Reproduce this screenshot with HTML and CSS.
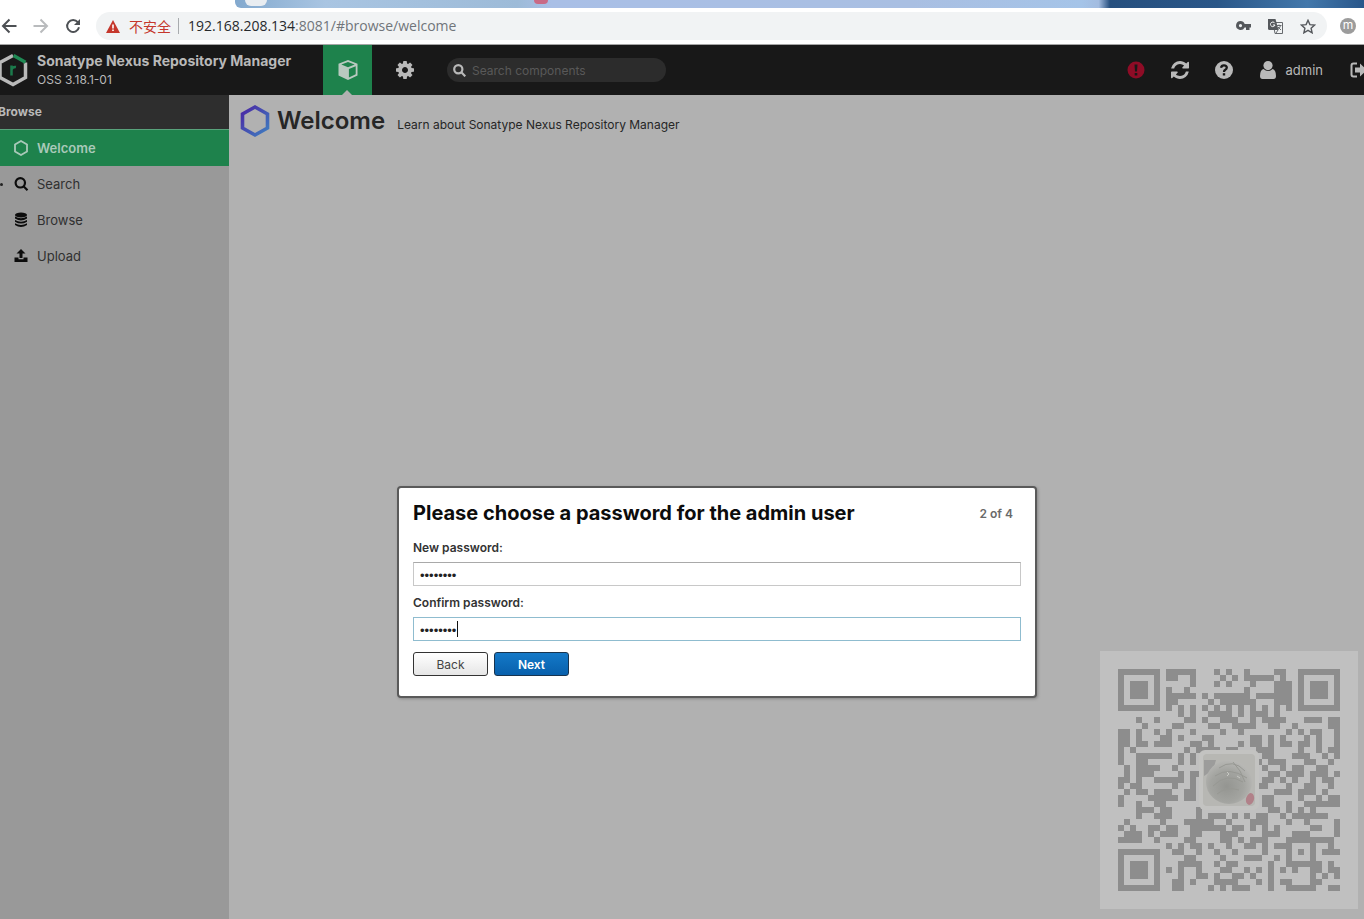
FILE: index.html
```html
<!DOCTYPE html>
<html lang="en">
<head>
<meta charset="utf-8">
<title>Sonatype Nexus Repository Manager</title>
<link rel="stylesheet" href="styles.css">
</head>
<body>
<div class="tabstrip"><span class="tabs"><i class="tab-dot"></i><i class="tab-mark"></i></span></div>
<div class="toolbar">
  <button class="nav-btn" aria-label="Back"><svg width="16" height="16" viewBox="0 0 16 16" fill="none" stroke="#4d5054" stroke-width="2"><path d="M15.500 8H2.500M8.500 1.500L2 8l6.500 6.500"/></svg></button>
  <button class="nav-btn" aria-label="Forward"><svg width="16" height="16" viewBox="0 0 16 16" fill="none" stroke="#b9bbbd" stroke-width="2"><path d="M.5 8h13M7.500 1.500L14 8l-6.500 6.500"/></svg></button>
  <button class="nav-btn" aria-label="Reload"><svg width="16" height="16" viewBox="0 0 16 16"><path d="M12.800 4.200A6 6 0 1 0 14 9.300" fill="none" stroke="#4d5054" stroke-width="2"/><path d="M15 1v6H9z" fill="#4d5054"/></svg></button>
  <div class="address">
    <svg width="14" height="13" viewBox="0 0 14 13"><path d="M7 0l7 13H0z" fill="#c5372c"/><path d="M6.200 4.500h1.600v4H6.200zM6.200 9.500h1.600v1.600H6.200z" fill="#fff"/></svg>
    <span class="insecure" lang="zh">不安全</span>
    <span class="url"><b>192.168.208.134</b>:8081/#browse/welcome</span>
    <span class="address-tools">
      <svg width="15" height="10" viewBox="0 0 15 10"><path fill="#55585c" fill-rule="evenodd" d="M4.500 0a4.500 4.500 0 0 1 4.200 3H15v3.500h-1.500V9H10V6.500H8.600A4.500 4.500 0 1 1 4.500 0zm0 3a1.600 1.600 0 1 0 0 3.200 1.600 1.600 0 0 0 0-3.200z"/></svg>
      <svg width="15" height="15" viewBox="0 0 15 15"><path d="M5 3.500h9.500v11H7z" fill="#f1f3f4" stroke="#66696d"/><path d="M0 0h7.500l3 11H1.500A1.500 1.500 0 0 1 0 9.500z" fill="#55585c"/><path d="M6.800 4.200A2.300 2.300 0 1 0 7 6H4.900" fill="none" stroke="#fff"/><path d="M8.500 6.500h5M11 5.500v1M12.500 6.500q-.5 2.500-3 4.500M10 8l3 3M8 14l2-3" fill="none" stroke="#66696d"/></svg>
      <svg width="16" height="15" viewBox="0 0 16 15"><path d="M8 1.300l1.900 4.300 4.700.5-3.500 3.100 1 4.600L8 11.400l-4.100 2.400 1-4.600L1.400 6.100l4.700-.5z" fill="none" stroke="#55585c" stroke-width="1.400"/></svg>
    </span>
  </div>
  <span class="avatar">m</span>
</div>

<header class="header">
  <svg class="logo" width="28" height="34" viewBox="0 0 28 34" fill="none"><path d="M13 2.500L0 9.500v15l13 7 12.500-7v-15" stroke="#b9b9b9" stroke-width="3.500"/><path d="M13.500 2.500L25.500 9.300" stroke="#1f8a54" stroke-width="3.500"/><path d="M11.500 22.500v-10M11.500 16.500q1-3 4.500-2.500" stroke="#1b7a4b" stroke-width="2.500"/></svg>
  <div class="brand"><strong>Sonatype Nexus Repository Manager</strong><span>OSS 3.18.1-01</span></div>
  <button class="mode mode-active" aria-label="Browse server contents"><svg width="20" height="20" viewBox="0 0 20 20"><path fill="#b9c9c0" fill-rule="evenodd" d="M10 0l9.500 3.800v11.700L10 20 .5 15.500V3.800zM10 1.900L3.300 4.500 10 7.200l6.700-2.700zM10.900 9v8.500l6.800-3.200V6.200z"/></svg></button>
  <button class="mode" aria-label="Server administration"><svg width="18" height="18" viewBox="0 0 1536 1536"><path fill="#b9b9b9" d="M1024 768q0-106-75-181t-181-75-181 75-75 181 75 181 181 75 181-75 75-181zm512-109v222q0 12-8 23t-20 13l-185 28q-19 54-39 91 35 50 107 138 10 12 10 25t-9 23q-27 37-99 108t-94 71q-12 0-26-9l-138-108q-44 23-91 38-16 136-29 186-7 28-36 28h-222q-14 0-24.500-8.500t-11.500-21.500l-28-184q-49-16-90-37l-141 107q-10 9-25 9-14 0-25-11-126-114-165-168-7-10-7-23 0-12 8-23 15-21 51-66.500t54-70.500q-27-50-41-99l-183-27q-13-2-21-12.500t-8-23.500v-222q0-12 8-23t19-13l186-28q14-46 39-92-40-57-107-138-10-12-10-24 0-10 9-23 26-36 98.500-107.500t94.500-71.500q13 0 26 10l138 107q44-23 91-38 16-136 29-186 7-28 36-28h222q14 0 24.500 8.500t11.500 21.500l28 184q49 16 90 37l142-107q9-9 24-9 13 0 25 10 129 119 165 170 7 8 7 22 0 12-8 23-15 21-51 66.500t-54 70.500q26 50 41 98l183 28q13 2 21 12.500t8 23.500z"/></svg></button>
  <label class="search"><svg width="13" height="13" viewBox="0 0 13 13" fill="none" stroke="#b9b9b9" stroke-width="2.200"><circle cx="5.300" cy="5.300" r="4.100"/><path d="M8.300 8.300l4 4"/></svg><input type="text" placeholder="Search components" aria-label="Search components"></label>
  <div class="user-tools">
    <button class="tool" aria-label="System status"><svg width="18" height="18" viewBox="0 0 18 18"><circle cx="9" cy="9" r="8.500" fill="#8e0c26"/><path d="M7.500 3.500h3L10 10.500H8zM7.700 12h2.600v2.500H7.700z" fill="#181818"/></svg></button>
    <button class="tool" aria-label="Refresh"><svg width="18" height="18" viewBox="0 0 1536 1536"><path fill="#b9b9b9" d="M1511 928q0 5-1 7-64 268-268 434.500t-478 166.500q-146 0-282.500-55t-243.500-157l-129 129q-19 19-45 19t-45-19-19-45v-448q0-26 19-45t45-19h448q26 0 45 19t19 45-19 45l-137 137q71 66 161 102t187 36q134 0 250-65t186-179q11-17 53-117 8-23 30-23h192q13 0 22.500 9.500t9.500 22.500zM1536 128v448q0 26-19 45t-45 19h-448q-26 0-45-19t-19-45 19-45l138-138q-148-137-349-137-134 0-250 65t-186 179q-11 17-53 117-8 23-30 23h-199q-13 0-22.500-9.500t-9.500-22.500v-7q65-268 270-434.500t480-166.500q146 0 284 55.500t245 156.500l130-129q19-19 45-19t45 19 19 45z"/></svg></button>
    <button class="tool" aria-label="Help"><svg width="18" height="18" viewBox="0 0 18 18"><circle cx="9" cy="9" r="9" fill="#b9b9b9"/><path d="M6 6.800Q6.500 4.200 9 4.300q2.700.1 2.800 2.300 0 1.300-1.500 2.200Q9 9.600 9 11" fill="none" stroke="#181818" stroke-width="2.300"/><path d="M7.800 12.200h2.400v2.300H7.800z" fill="#181818"/></svg></button>
    <button class="tool user"><svg width="16" height="18" viewBox="0 0 16 18"><circle cx="8" cy="4.600" r="4.600" fill="#b9b9b9"/><path d="M3.500 8Q8 12 12.500 8 16 9 16 15q0 3-2.500 3h-11Q0 18 0 15q0-6 3.500-7z" fill="#b9b9b9"/></svg>admin</button>
    <button class="tool logout" aria-label="Sign out"><svg width="18" height="16" viewBox="0 0 18 16"><path d="M7 1.500H3.500q-2 0-2 2v9q0 2 2 2H7" fill="none" stroke="#b9b9b9" stroke-width="2"/><path d="M5 5.500h5V1.500L17 8l-7 6.500v-4H5z" fill="#b9b9b9"/></svg></button>
  </div>
</header>

<div class="workspace">
  <nav class="sidebar" aria-label="Browse">
    <h2>Browse</h2>
    <a href="#welcome" class="active"><svg width="16" height="16" viewBox="0 0 16 16"><path d="M8 1l6 3.500v7L8 15l-6-3.500v-7z" fill="none" stroke="#a9c9b9" stroke-width="1.800"/></svg>Welcome</a>
    <a href="#search" class="expandable"><svg width="16" height="16" viewBox="0 0 16 16" fill="none" stroke="#0c0c0c" stroke-width="2.200"><circle cx="7.300" cy="6.800" r="4.700"/><path d="M10.500 10.300l4 4"/></svg>Search</a>
    <a href="#browse"><svg width="16" height="16" viewBox="0 0 16 16" fill="#0c0c0c"><ellipse cx="8" cy="3" rx="6" ry="2.500"/><path d="M2 4.500q6 3.500 12 0v2q-6 3.800-12 0zM2 8q6 3.500 12 0v1.700q-6 3.800-12 0zM2 11.200q6 3.500 12 0V13q-6 3.800-12 0z"/></svg>Browse</a>
    <a href="#upload"><svg width="16" height="16" viewBox="0 0 16 16" fill="#0c0c0c"><path d="M8 1l4.500 4.500h-3V10h-3V5.500h-3zM1.500 9.500h4v1.700h5V9.500h4V14h-13z"/></svg>Upload</a>
  </nav>
  <main class="content">
    <div class="page-title">
      <svg width="30" height="34" viewBox="0 0 30 34"><defs><linearGradient id="hex" x1="0" y1="0" x2="1" y2="1"><stop offset="0" stop-color="#4a25a4"/><stop offset="1" stop-color="#3f7fc0"/></linearGradient></defs><path d="M15 3l12.500 7v14L15 31 2.500 24V10z" fill="none" stroke="url(#hex)" stroke-width="3.600"/></svg>
      <h1>Welcome</h1>
      <p>Learn about Sonatype Nexus Repository Manager</p>
    </div>
  </main>
</div>

<div class="overlay">
  <form class="dialog" role="dialog" aria-labelledby="dialog-title">
    <div class="dialog-head"><h2 id="dialog-title">Please choose a password for the admin user</h2><span>2 of 4</span></div>
    <label for="new-password">New password:</label>
    <div class="field"><input id="new-password" type="password" value="password"></div>
    <label for="confirm-password">Confirm password:</label>
    <div class="field"><input id="confirm-password" class="current" type="password" value="password"><i class="caret"></i></div>
    <div class="actions"><button type="button">Back</button><button type="button" class="primary">Next</button></div>
  </form>
</div>

<aside class="qr" aria-label="QR code">
  <svg id="qr" viewBox="0 0 37 37" shape-rendering="crispEdges"><path id="modules" fill="#8d8d8d"/></svg>
  <svg class="portrait" viewBox="0 0 60 60"><defs><radialGradient id="stone" cx=".45" cy=".6" r=".6"><stop offset="0" stop-color="#949591"/><stop offset=".6" stop-color="#a3a4a0"/><stop offset="1" stop-color="#b8b8b5"/></radialGradient></defs><rect width="60" height="60" rx="6" fill="#c3c3c1"/><rect x="4" y="4" width="52" height="52" rx="4" fill="#b7b7b3"/><path d="M5 10h12l-3 10-9 6z" fill="#9c9c9b"/><ellipse cx="30" cy="32" rx="23" ry="22" fill="url(#stone)"/><g fill="none" stroke="#979893"><path d="M20 18q14-10 26 3M16 26q14-10 32 2M14 36q14-14 30-4M18 44q10-8 22-4M34 12q8 8 12 20"/></g><path d="M28 22l2 2-2 2M38 26l3 2" stroke="#c7c8c3" fill="none"/><ellipse cx="51" cy="49" rx="4" ry="6" fill="#b18189" transform="rotate(15 51 49)"/></svg>
</aside>
<script src="qr.js"></script>
</body>
</html>
```
FILE: styles.css
```css
* { box-sizing: border-box; }
body { margin: 0; min-height: 100vh; display: flex; flex-direction: column; position: relative; overflow: hidden; font-family: Inter, "Liberation Sans", sans-serif; font-size: 13px; background: #b1b1b1; }
svg { display: block; flex: none; }
button { font: inherit; border: 0; padding: 0; background: none; color: inherit; }
h1, h2, p { margin: 0; }

.tabstrip { height: 8px; display: flex; padding-left: 235px; background: #fff; }
.tabs { flex: 1; display: flex; justify-content: space-between; border-bottom-left-radius: 6px; overflow: hidden; background: linear-gradient(90deg, #83a9ce 0, #a9c5e2 8%, #9dbbd8 25%, #a9bfe6 28%, #a9bfe2 60%, #a5c4e8 75%, #a3bce0 76.500%, #27507f 77.500%, #2a5788 87%, #4378ab 95%, #28568a 100%); }
.tab-dot { width: 22px; height: 6px; margin-left: 10px; border-radius: 0 0 11px 11px; background: #e9edf1; }
.tab-mark { width: 14px; height: 4px; margin-right: 816px; border-radius: 0 0 7px 7px; background: #c96a86; }

.toolbar { height: 37px; display: flex; align-items: center; gap: 16px; padding: 0 8px 0 1px; background: #fff; border-bottom: 1px solid #a5a5a5; }
.nav-btn { width: 16px; }
.address { flex: 1; height: 28px; display: flex; align-items: center; padding: 0 11px 0 10px; margin-left: -1px; border-radius: 14px; background: #f1f3f4; }
.insecure { padding: 0 7px 0 9px; border-right: 1px solid #a8abae; font: 14px/16px "Noto Sans CJK SC", sans-serif; color: #c5372c; }
.url { margin-left: 9px; font: 14px/20px "Open Sans", sans-serif; color: #70757a; }
.url b { font-weight: 400; color: #26292c; }
.address-tools { margin-left: auto; display: flex; align-items: center; gap: 17px; }
.avatar { width: 16px; height: 16px; margin-left: -3px; border-radius: 50%; background: #9c9c9c; color: #fff; font-size: 12px; line-height: 14px; text-align: center; }

.header { height: 50px; display: flex; align-items: center; background: #181818; color: #b9b9b9; overflow: hidden; }
.brand { width: 295px; padding-left: 9px; display: flex; flex-direction: column; white-space: nowrap; }
.brand strong { font-size: 14px; line-height: 20px; font-weight: 700; }
.brand span { font-size: 12px; line-height: 18px; }
.mode { width: 49px; height: 50px; display: flex; align-items: center; justify-content: center; margin-right: 8px; position: relative; }
.mode-active { background: #1e824c; }
.mode-active::after { content: ""; position: absolute; bottom: 0; left: 19px; border: 5px solid transparent; border-top: 0; border-bottom-color: #b1b1b1; }
.search { width: 219px; height: 24px; display: flex; align-items: center; gap: 6px; padding: 0 6px; margin-left: 10px; border-radius: 12px; background: #2c2c2c; }
.search input { flex: 1; min-width: 0; padding: 0; border: 0; background: none; color: #b9b9b9; font: inherit; font-size: 12px; }
.search input::placeholder { color: #595959; opacity: 1; }
.user-tools { margin-left: auto; display: flex; align-items: center; gap: 26px; margin-right: -4px; }
.tool { display: flex; align-items: center; }
.user { gap: 10px; margin-left: 1px; }
.logout { margin-left: 1px; }

.workspace { flex: 1; display: flex; }
.sidebar { width: 229px; background: #999; }
.sidebar h2 { height: 34px; text-indent: -2px; line-height: 34px; font-size: 12px; font-weight: 700; color: #b9b9b9; background: #2e2e2e; }
.sidebar a { height: 36px; display: flex; align-items: center; gap: 8px; padding-left: 13px; color: #303030; text-decoration: none; font-size: 13px; }
.sidebar .active { height: 37px; border-top: 1px solid #58a27b; background: #1e824c; color: #a9c9b9; font-weight: 600; }
.expandable::before { content: ""; width: 3px; height: 3px; margin: 0 -3px 0 -13px; border-radius: 50%; background: #222; }
.expandable svg { margin-left: 5px; }
.content { flex: 1; }
.page-title { display: flex; align-items: center; padding: 9px 0 0 11px; color: #262626; }
.page-title h1 { margin-left: 7px; font-size: 24px; line-height: 32px; font-weight: 600; }
.page-title p { margin: 7px 0 0 12px; font-size: 12px; line-height: 16px; }

.overlay { position: absolute; inset: 265px 0 0 70px; display: flex; align-items: center; justify-content: center; }
.dialog { width: 640px; padding: 12px 14px 20px; border: 2px solid #5a5a5a; border-radius: 4px; background: #fff; box-shadow: 1px 1px 3px #888; color: #333; }
.dialog-head { display: flex; align-items: center; justify-content: space-between; padding-right: 8px; margin-bottom: 14px; }
.dialog-head h2 { font-size: 20px; line-height: 26px; font-weight: 700; color: #0c0c0c; }
.dialog-head span { font-size: 12px; font-weight: 600; color: #6a6a6a; }
.dialog label { display: block; font-size: 12px; line-height: 16px; font-weight: 600; margin-bottom: 6px; }
.field { position: relative; margin-bottom: 9px; }
.field input { display: block; width: 100%; height: 24px; padding: 2px 6px 0; border: 1px solid #c8c8c8; border-top-color: #a9a9a9; background: #fff; color: #222; font: 13px "Liberation Sans", sans-serif; }
.field .current { border-color: #8fbccf; }
.caret { position: absolute; left: 44px; top: 4px; width: 1px; height: 16px; background: #111; }
.actions { display: flex; gap: 6px; margin-top: 11px; }
.actions button { width: 75px; height: 24px; border: 1px solid #333; border-radius: 3px; background: linear-gradient(#fff, #e6e6e6); color: #444; font-size: 12px; }
.actions .primary { border-color: #18344f; background: linear-gradient(#1479c8, #0860ac); color: #fff; font-weight: 600; }

.qr { position: absolute; right: 6px; bottom: 10px; padding: 18px; background: #c0c0c0; }
.qr svg { width: 222px; height: 222px; }
.qr .portrait { position: absolute; left: 99px; top: 99px; width: 60px; height: 60px; }
```
FILE: qr.js
```js
// Dark columns of each row, written as single columns or ranges.
const rows = [
  "8-12 16 18 21 26 27", "8 9 12 17 19 21-25 27", "12 16 18 22 26-28", "8 11 21 26-28",
  "8-12 14 16-21 23-28", "8 9 15 17-22 26-28", "8 10 12 14 16 18 20 22 24 26 28", "10 12 15-18 20 22-24 26",
  "3 6 11 12 14 17-19 22 24-27 31-33 35 36", "4 9 10 15 16 19-22 25 26 29 35 36",
  "0 1 3 6 8 12 17 20 28 30 32 33 36", "0 1 3 7 8 10 14 15 22 23 25 27 31 33 36",
  "0 1 3 4 6-8 12 13 15 20 22 23 25 27 28 30 31 33 36", "0 2 11 13-16 18 19 23-25 30 33 35 36",
  "0 3-8 10 12 24 25 29-31 34 36", "0 3 4 10 12 23 25-27 31 32 35",
  "1 3-6 9 24 27 29 30 33 34", "1 3-5 10 12 13 25 26 28-30 32-34 36",
  "0 1 3 6-10 12 24 25 27 29 32 34 35", "0 2 3 9 12 23 24 28 31 32 35",
  "1 3 4 6-8 11 12 26-28 30-32 34", "0 5-9 11 12 24 25 30 33 35 36",
  "0 3 6 7 24 25 28 31-36", "3-5 7 8 13 25 26 28 30 32",
  "3 6-8 13 15-17 19 21 23 24 27 29-34", "1 7 11-15 18 22-24 28 31 36",
  "0 2 5 6 8 9 12-17 19 20 22 24 26 32 33 36", "1-3 5 7-9 12 13 17-19 24-26 29-31 36",
  "0-3 6 11 12 17 18 20 22-24 28-35", "8 10 12 13 15 18 21 22 24 26-28 32 35",
  "9 10 13 16 19 24 28 30 32 34-36", "11 12 17 21-23 26 28 32", "10-13 16 18 19 25 28-33 35",
  "8 10 13 17 18 21 23 25 27 29 32 33 35 36", "10 13 14 16 19 20 22 25 32 34 36",
  "9 10 12 16-19 23 25 27 28 32 33", "9 10 15 17 19-21 25 28-32 35 36"
];
let d = "";
rows.forEach((row, y) => row.split(" ").forEach(part => {
  const [from, to = from] = part.split("-").map(Number);
  d += `M${from} ${y}h${to - from + 1}v1H${from}z`;
}));
// The three finder squares.
[[0, 0], [30, 0], [0, 30]].forEach(([x, y]) => {
  d += `M${x} ${y}h7v7h-7zM${x + 1} ${y + 1}v5h5v-5zM${x + 2} ${y + 2}h3v3h-3z`;
});
document.getElementById("modules").setAttribute("d", d);
```
